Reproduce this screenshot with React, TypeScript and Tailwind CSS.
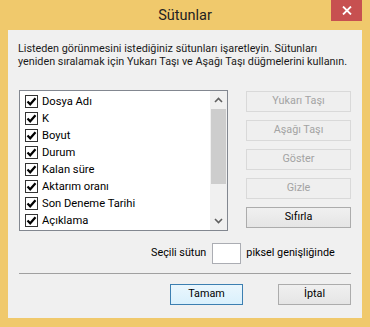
import { useState } from "react";

const columns = [
  "Dosya Adı",
  "K",
  "Boyut",
  "Durum",
  "Kalan süre",
  "Aktarım oranı",
  "Son Deneme Tarihi",
  "Açıklama",
];

function CheckBox({ checked }: { checked: boolean }) {
  return (
    <span className="w-[13px] h-[13px] border border-[#333333] bg-white flex items-center justify-center shrink-0">
      {checked && (
        <svg width="11" height="11" viewBox="0 0 11 11">
          <path d="M1.5 5.5 L4.2 8.3 L9.5 2.2" fill="none" stroke="#000" strokeWidth="2.2" />
        </svg>
      )}
    </span>
  );
}

function SideButton({ label, enabled = false }: { label: string; enabled?: boolean }) {
  return (
    <button
      className={
        enabled
          ? "w-[105px] h-[21px] border border-[#acacac] bg-gradient-to-b from-[#f0f0f0] to-[#e5e5e5] text-black leading-none"
          : "w-[105px] h-[21px] border border-[#d9d9d9] bg-[#efefef] text-[#a3a3a3] leading-none"
      }
    >
      {label}
    </button>
  );
}

export default function App() {
  const [checked] = useState(columns.map(() => true));

  return (
    <div className="w-[370px] h-[327px] bg-[#f0c96c] flex flex-col select-none font-['Roboto','Liberation_Sans',sans-serif] text-[10.8px]">
      {/* başlık */}
      <div className="relative h-[30px] flex items-center justify-center">
        <span className="text-[14.5px] text-[#222] pt-[1px]">Sütunlar</span>
        <button className="absolute right-[8px] top-0 w-[31px] h-[21px] bg-[#c75050] flex items-center justify-center">
          <svg width="10" height="9" viewBox="0 0 10 9">
            <path d="M1 0.5 L9 8.5 M9 0.5 L1 8.5" stroke="#fff" strokeWidth="1.8" />
          </svg>
        </button>
      </div>

      <div className="mx-[8px] h-[288px] bg-[#f0f0f0] flex flex-col px-[11px] text-black">
        <p className="mt-[12px] -ml-[1px] leading-[13px] text-[#1a1a1a] whitespace-nowrap">
          Listeden görünmesini istediğiniz sütunları işaretleyin. Sütunları
          <br />
          yeniden sıralamak için Yukarı Taşı ve Aşağı Taşı düğmelerini kullanın.
        </p>

        <div className="mt-[22px] flex gap-[18px]">
          <div className="w-[209px] h-[141px] border border-[#828790] bg-white flex">
            <div className="flex-1 pt-[2px] pl-[5px] flex flex-col">
              {columns.map((c, i) => (
                <div key={c} className="h-[17px] flex items-center gap-[4px]">
                  <CheckBox checked={checked[i]} />
                  <span className="leading-none whitespace-nowrap text-[11.2px]">{c}</span>
                </div>
              ))}
            </div>
            <div className="w-[17px] bg-[#f0f0f0] flex flex-col">
              <div className="h-[18px] flex items-center justify-center">
                <svg width="9" height="6" viewBox="0 0 9 6">
                  <path d="M1 5 L4.5 1.5 L8 5" fill="none" stroke="#606060" strokeWidth="1.6" />
                </svg>
              </div>
              <div className="mx-[1px] h-[75px] bg-[#cdcdcd]" />
              <div className="flex-1" />
              <div className="h-[18px] flex items-center justify-center">
                <svg width="9" height="6" viewBox="0 0 9 6">
                  <path d="M1 1 L4.5 4.5 L8 1" fill="none" stroke="#606060" strokeWidth="1.6" />
                </svg>
              </div>
            </div>
          </div>

          <div className="mt-[1px] flex flex-col gap-[8px]">
            <SideButton label="Yukarı Taşı" />
            <SideButton label="Aşağı Taşı" />
            <SideButton label="Göster" />
            <SideButton label="Gizle" />
            <SideButton label="Sıfırla" enabled />
          </div>
        </div>

        <div className="mt-[12px] ml-[132px] flex items-center whitespace-nowrap">
          <span>Seçili sütun</span>
          <input className="ml-[6px] w-[29px] h-[21px] border border-[#abadb3] bg-white outline-none" />
          <span className="ml-[5px]">piksel genişliğinde</span>
        </div>

        <div className="mt-[9px] h-[1px] bg-[#a0a0a0]" />

        <div className="mt-[10px] flex justify-end gap-[35px]">
          <button className="w-[73px] h-[21px] border border-[#3c7fb1] bg-gradient-to-b from-[#eaf6fd] to-[#d9f0fc] leading-none">
            Tamam
          </button>
          <button className="w-[73px] h-[21px] border border-[#acacac] bg-gradient-to-b from-[#f0f0f0] to-[#e5e5e5] leading-none">
            İptal
          </button>
        </div>
      </div>
    </div>
  );
}
